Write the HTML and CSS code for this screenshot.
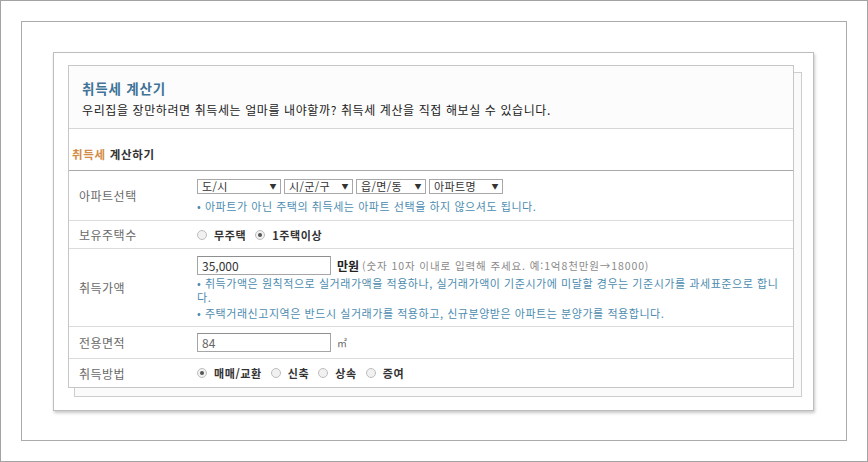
FILE: index.html
```html
<!DOCTYPE html>
<html lang="ko">
<head>
<meta charset="utf-8">
<title>취득세 계산기</title>
<link rel="stylesheet" href="styles.css">
</head>
<body>
<div class="screen">
  <div class="frame">
    <div class="card">
      <div class="calc">
        <div class="intro">
          <h1 class="title">취득세 계산기</h1>
          <p class="lead">우리집을 장만하려면 취득세는 얼마를 내야할까? 취득세 계산을 직접 해보실 수 있습니다.</p>
        </div>
        <h2 class="section"><span class="accent">취득세</span> 계산하기</h2>
        <div class="table">
          <div class="row r1">
            <div class="label">아파트선택</div>
            <div class="value">
              <div class="selects">
                <span class="select s1">도/시<i class="arrow">▼</i></span>
                <span class="select s2">시/군/구<i class="arrow">▼</i></span>
                <span class="select s3">읍/면/동<i class="arrow">▼</i></span>
                <span class="select s4">아파트명<i class="arrow">▼</i></span>
              </div>
              <p class="note">• 아파트가 아닌 주택의 취득세는 아파트 선택을 하지 않으셔도 됩니다.</p>
            </div>
          </div>
          <div class="row r2">
            <div class="label">보유주택수</div>
            <div class="value options">
              <span class="radio"></span><span class="opt">무주택</span>
              <span class="radio on"></span><span class="opt">1주택이상</span>
            </div>
          </div>
          <div class="row r3">
            <div class="label">취득가액</div>
            <div class="value">
              <div class="inline">
                <span class="field">35,000</span>
                <span class="unit">만원</span>
                <span class="hint">(숫자 10자 이내로 입력해 주세요. 예:1억8천만원→18000)</span>
              </div>
              <div class="notes">
                <p class="note">• 취득가액은 원칙적으로 실거래가액을 적용하나, 실거래가액이 기준시가에 미달할 경우는 기준시가를 과세표준으로 합니다.</p>
                <p class="note">• 주택거래신고지역은 반드시 실거래가를 적용하고, 신규분양받은 아파트는 분양가를 적용합니다.</p>
              </div>
            </div>
          </div>
          <div class="row r4">
            <div class="label">전용면적</div>
            <div class="value inline">
              <span class="field muted">84</span>
              <span class="sqm">㎡</span>
            </div>
          </div>
          <div class="row r5">
            <div class="label">취득방법</div>
            <div class="value options">
              <span class="radio on"></span><span class="opt">매매/교환</span>
              <span class="radio"></span><span class="opt">신축</span>
              <span class="radio"></span><span class="opt">상속</span>
              <span class="radio"></span><span class="opt">증여</span>
            </div>
          </div>
        </div>
      </div>
    </div>
  </div>
</div>
</body>
</html>
```
FILE: styles.css
```css
* { box-sizing: border-box; }
html, body { margin: 0; padding: 0; background: #fff; }
body {
  font-family: "Noto Sans CJK KR", "Noto Sans", sans-serif;
  color: #333;
  width: 868px;
  height: 462px;
  overflow: hidden;
}
p, h1, h2 { margin: 0; }

.screen {
  width: 868px;
  height: 462px;
  border: 1px solid #a3a3a3;
  padding: 20px;
}
.frame {
  height: 100%;
  border: 1px solid #ababab;
  padding: 30px 0 0 31px;
}
.card {
  width: 761px;
  height: 359px;
  border: 1px solid #bdbdbd;
  box-shadow: 1px 2px 3px rgba(0, 0, 0, 0.22);
  padding: 12px 0 0 14px;
  background: #fff;
}
.calc {
  width: 726px;
  height: 323px;
  border: 1px solid #c6c6c6;
  background: #fff;
  box-shadow: 7px 8px 0 0 #fafafa, 7px 8px 0 1px #cdcdcd;
  display: flex;
  flex-direction: column;
}

.intro {
  height: 63px;
  border-bottom: 1px solid #d6d6d6;
  background: #fcfcfc;
  padding: 13px 0 0 13px;
}
.title {
  font-size: 13.5px;
  line-height: 19px;
  font-weight: 700;
  letter-spacing: 0.8px;
  color: #3f7397;
}
.lead {
  margin-top: 3px;
  font-size: 12px;
  line-height: 18px;
  letter-spacing: 0.6px;
  color: #222;
}

.section {
  height: 41px;
  padding: 17px 0 0 3px;
  font-size: 11.5px;
  line-height: 17px;
  font-weight: 700;
  letter-spacing: 0.7px;
  color: #333;
}
.accent { color: #d38b48; }

.table { border-top: 1px solid #a9a9a9; }
.row {
  display: grid;
  grid-template-columns: 128px 1fr;
  align-items: center;
  border-bottom: 1px solid #dcdcdc;
}
.row:last-child { border-bottom: 0; }
.r1 { height: 50px; }
.r2 { height: 28px; }
.r3 { height: 78px; }
.r4 { height: 32px; }
.r5 { height: 28px; }

.label {
  padding-left: 10px;
  font-size: 12px;
  letter-spacing: 0.5px;
  color: #6a6a6a;
}

.selects { display: flex; gap: 3px; }
.select {
  display: inline-flex;
  align-items: center;
  justify-content: space-between;
  height: 15px;
  border: 1px solid #a8a8a8;
  padding: 0 3px 0 4px;
  font-size: 11px;
  line-height: 13px;
  letter-spacing: 0.4px;
  color: #333;
  background: #fff;
}
.s1 { width: 84px; }
.s2 { width: 69px; }
.s3 { width: 70px; }
.s4 { width: 74px; }
.arrow { font-style: normal; font-size: 7px; color: #333; margin-left: 4px; }

.note {
  font-size: 11px;
  line-height: 14px;
  letter-spacing: 0.55px;
  color: #4d8cb0;
}
.r1 .note { margin-top: 5px; }
.notes { max-width: 584px; margin-top: 1px; }
.notes .note + .note { margin-top: 2px; }

.inline { display: flex; align-items: center; }
.field {
  display: inline-block;
  width: 134px;
  height: 19px;
  border: 1px solid #a6a6a6;
  border-top-color: #8f8f8f;
  padding-left: 4px;
  font-size: 12px;
  line-height: 17px;
  color: #333;
  background: #fff;
}
.field.muted { color: #666; }
.unit {
  margin-left: 6px;
  font-size: 12px;
  font-weight: 700;
  color: #222;
}
.hint {
  margin-left: 3px;
  font-size: 10.5px;
  letter-spacing: 0.9px;
  color: #8a8a8a;
}
.sqm {
  margin-left: 6px;
  font-size: 10px;
  color: #666;
}

.options { display: flex; align-items: center; }
.radio {
  position: relative;
  display: inline-block;
  width: 10px;
  height: 10px;
  border-radius: 50%;
  border: 1px solid #bdbdbd;
  background: #f1f1f1;
  margin-right: 7px;
}
.radio.on::after {
  content: "";
  position: absolute;
  left: 2px;
  top: 2px;
  width: 4px;
  height: 4px;
  border-radius: 50%;
  background: #555;
}
.opt {
  font-size: 11px;
  font-weight: 700;
  letter-spacing: 0.6px;
  color: #333;
  margin-right: 9px;
}
```
